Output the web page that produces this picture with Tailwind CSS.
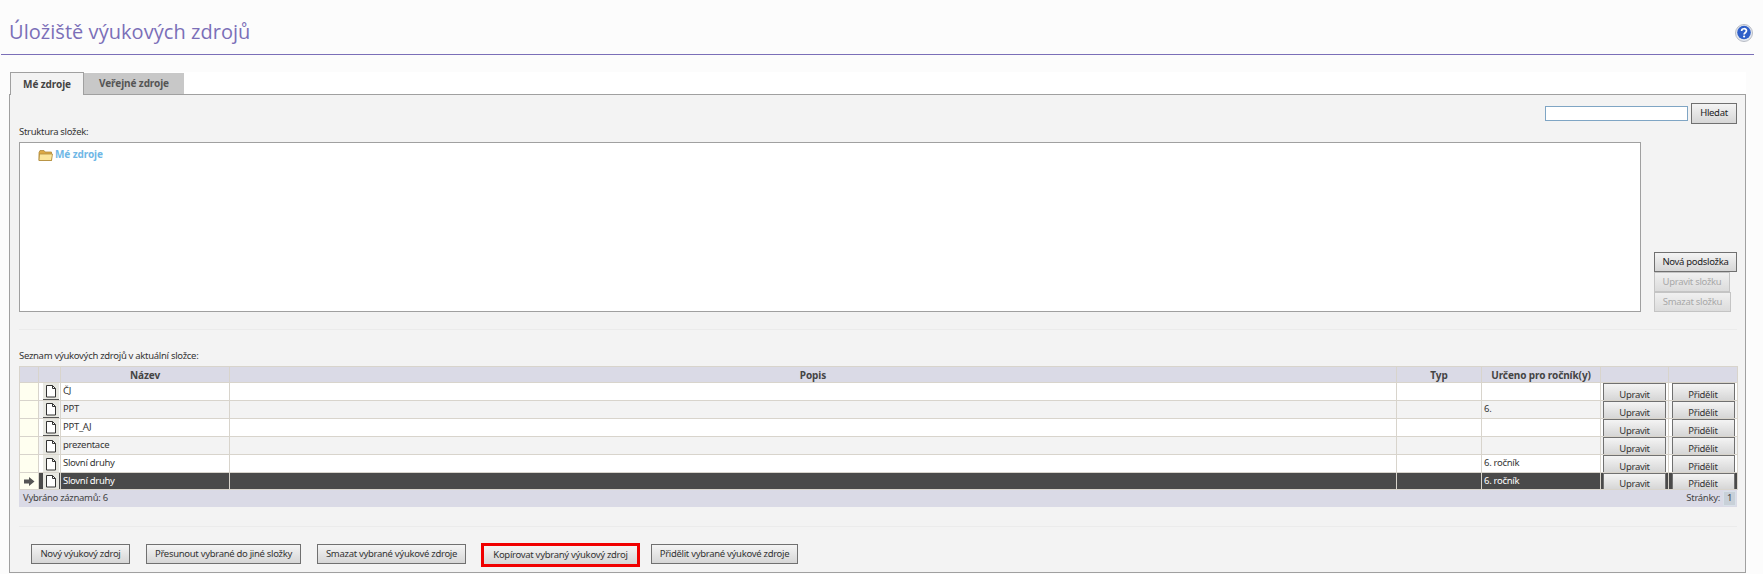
<!DOCTYPE html>
<html lang="cs"><head><meta charset="utf-8"><title>Úložiště výukových zdrojů</title>
<script src="https://cdn.jsdelivr.net/npm/@tailwindcss/browser@4"></script></head>
<body class="m-0 bg-[#fcfcfc] font-['Noto_Sans',sans-serif] text-[9.5px] tracking-[-0.3px] text-[#333] overflow-hidden">
<div class="w-[1763px] h-[574px] flex flex-col">
  <header class="h-[55px] ml-px mr-[9px] border-b border-[#7b6fb8] flex items-start justify-between pl-2 pr-px">
    <h1 class="mt-[19px] text-[20px] tracking-[0.05px] leading-[25px] text-[#7b6fb8] font-normal font-['Open_Sans',sans-serif]">Úložiště výukových zdrojů</h1>
    <svg class="mt-[24px]" width="18" height="18" viewBox="0 0 18 18"><circle cx="9" cy="9" r="8.500" fill="#e4e8f0" stroke="#b8bcc4"/><circle cx="9" cy="8.500" r="6.800" fill="#2f5fc8"/><path d="M6.600 7c0-3 4.900-3 4.900-.2 0 1.900-2.400 1.900-2.400 3.600" fill="none" stroke="#fff" stroke-width="1.700"/><circle cx="9.100" cy="12.500" r="1.100" fill="#fff"/></svg>
  </header>
  <main class="ml-[10px] mr-[17px] mt-[17px] bg-white">
    <nav class="h-[22px] flex items-start font-bold text-[10px] tracking-[-0.1px]">
      <div class="w-[74px] h-[23px] bg-[#f3f3f3] border border-b-0 border-[#a0a0a0] flex items-center justify-center text-[#444] relative z-10">Mé zdroje</div>
      <div class="w-[100px] h-[21px] mt-px bg-[#c8c8c8] flex items-center justify-center text-[#555]">Veřejné zdroje</div>
    </nav>
    <section class="-ml-px h-[479px] border border-[#a0a0a0] bg-[#f3f3f3] pl-[9px] pr-[8px] relative flex flex-col">
      <div class="h-[47px] relative flex items-start justify-between">
        <label class="mt-[30px] leading-[13px] text-[#333]">Struktura složek:</label>
        <div class="mt-2 flex gap-[3px]">
          <input class="w-[143px] h-[15px] mt-[3px] bg-white border border-[#7fa5c4]">
          <button class="w-[46px] h-[21px] border border-[#707070] bg-gradient-to-b from-[#f4f4f4] to-[#d6d6d6] text-[#222]">Hledat</button>
        </div>
      </div>
      <div class="flex h-[170px] justify-between">
        <div class="w-[1622px] h-[170px] bg-white border border-[#a0a0a0] flex items-start pl-[18px] pt-[5px] gap-[2px]">
          <svg width="15" height="13" viewBox="0 0 15 13" class="mt-px"><path d="M1 3.500 2 1.500h4l1 1.500h6.500v8.500H1z" fill="#dca945" stroke="#b08a3a" stroke-width=".8"/><path d="M1 11.500 1.500 5h13l-1 6.500z" fill="#fbe59a" stroke="#b08a3a" stroke-width=".8"/></svg>
          <span class="font-bold text-[10px] tracking-[-0.1px] text-[#6fb7e6] leading-[13px]">Mé zdroje</span>
        </div>
        <div class="w-[83px] flex flex-col justify-end items-start text-[#222]">
          <button class="w-[83px] h-[20px] border border-[#707070] bg-gradient-to-b from-[#f4f4f4] to-[#d6d6d6]">Nová podsložka</button>
          <button class="w-[76px] h-[20px] border border-[#c4c4c4] bg-gradient-to-b from-[#f0f0f0] to-[#dcdcdc] text-[#a8a8a8]">Upravit složku</button>
          <button class="w-[77px] h-[20px] border border-[#c4c4c4] bg-gradient-to-b from-[#f0f0f0] to-[#dcdcdc] text-[#a8a8a8]">Smazat složku</button>
        </div>
      </div>
      <div class="mt-[17px] border-t border-[#ebebeb]"></div>
      <div class="mt-[19px] leading-[14px] h-[17px] text-[#333]">Seznam výukových zdrojů v aktuální složce:</div>
      <table class="table-fixed border-collapse w-[1718px]">
        <colgroup><col class="w-[19px]"><col class="w-[22px]"><col class="w-[169px]"><col class="w-[1167px]"><col class="w-[85px]"><col class="w-[119px]"><col class="w-[68px]"><col class="w-[69px]"></colgroup>
        <thead><tr class="h-[16px] bg-[#dadae6] font-bold text-[10px] leading-[14px] tracking-[-0.1px] text-[#444] text-center">
          <th class="p-0 border border-[#d8d4cc]"></th><th class="p-0 border border-[#d8d4cc]"></th><th class="p-0 border border-[#d8d4cc]">Název</th><th class="p-0 border border-[#d8d4cc]">Popis</th><th class="p-0 border border-[#d8d4cc]">Typ</th><th class="p-0 border border-[#d8d4cc]">Určeno pro ročník(y)</th><th class="p-0 border border-[#d8d4cc]"></th><th class="p-0 border border-[#d8d4cc]"></th>
        </tr></thead>
        <tbody>
          <tr class="h-[18px] bg-white"><td class="border border-[#d8d4cc] bg-[#fffff0]"></td><td class="border border-[#d8d4cc] p-0"><div class="w-[16px] h-[17px] ml-[4px] bg-[#e8e8e2] border-b border-[#555] flex items-center justify-center"><svg width="12" height="14" viewBox="0 0 12 14"><path d="M1.500 1.500h6l3 3v8.500h-9z" fill="#fff" stroke="#333"/><path d="M7.500 1.500v3h3" fill="none" stroke="#333"/></svg></div></td><td class="border border-[#d8d4cc] p-0 px-[2px]">ČJ</td><td class="border border-[#d8d4cc]"></td><td class="border border-[#d8d4cc]"></td><td class="border border-[#d8d4cc] p-0 px-[2px]"></td><td class="border border-[#d8d4cc] p-0 text-center"><button class="block mx-auto w-[63px] h-[17px] pt-[4px] leading-[13px] overflow-hidden border border-[#707070] border-b-0 bg-gradient-to-b from-[#f4f4f4] to-[#d6d6d6] text-[#333]">Upravit</button></td><td class="border border-[#d8d4cc] p-0 text-center"><button class="block mx-auto w-[63px] h-[17px] pt-[4px] leading-[13px] overflow-hidden border border-[#707070] border-b-0 bg-gradient-to-b from-[#f4f4f4] to-[#d6d6d6] text-[#333]">Přidělit</button></td></tr>
          <tr class="h-[18px] bg-[#f3f3f3]"><td class="border border-[#d8d4cc] bg-[#fffff0]"></td><td class="border border-[#d8d4cc] p-0"><div class="w-[16px] h-[17px] ml-[4px] bg-[#e8e8e2] border-b border-[#555] flex items-center justify-center"><svg width="12" height="14" viewBox="0 0 12 14"><path d="M1.500 1.500h6l3 3v8.500h-9z" fill="#fff" stroke="#333"/><path d="M7.500 1.500v3h3" fill="none" stroke="#333"/></svg></div></td><td class="border border-[#d8d4cc] p-0 px-[2px]">PPT</td><td class="border border-[#d8d4cc]"></td><td class="border border-[#d8d4cc]"></td><td class="border border-[#d8d4cc] p-0 px-[2px]">6.</td><td class="border border-[#d8d4cc] p-0 text-center"><button class="block mx-auto w-[63px] h-[17px] pt-[4px] leading-[13px] overflow-hidden border border-[#707070] border-b-0 bg-gradient-to-b from-[#f4f4f4] to-[#d6d6d6] text-[#333]">Upravit</button></td><td class="border border-[#d8d4cc] p-0 text-center"><button class="block mx-auto w-[63px] h-[17px] pt-[4px] leading-[13px] overflow-hidden border border-[#707070] border-b-0 bg-gradient-to-b from-[#f4f4f4] to-[#d6d6d6] text-[#333]">Přidělit</button></td></tr>
          <tr class="h-[18px] bg-white"><td class="border border-[#d8d4cc] bg-[#fffff0]"></td><td class="border border-[#d8d4cc] p-0"><div class="w-[16px] h-[17px] ml-[4px] bg-[#e8e8e2] border-b border-[#555] flex items-center justify-center"><svg width="12" height="14" viewBox="0 0 12 14"><path d="M1.500 1.500h6l3 3v8.500h-9z" fill="#fff" stroke="#333"/><path d="M7.500 1.500v3h3" fill="none" stroke="#333"/></svg></div></td><td class="border border-[#d8d4cc] p-0 px-[2px]">PPT_AJ</td><td class="border border-[#d8d4cc]"></td><td class="border border-[#d8d4cc]"></td><td class="border border-[#d8d4cc] p-0 px-[2px]"></td><td class="border border-[#d8d4cc] p-0 text-center"><button class="block mx-auto w-[63px] h-[17px] pt-[4px] leading-[13px] overflow-hidden border border-[#707070] border-b-0 bg-gradient-to-b from-[#f4f4f4] to-[#d6d6d6] text-[#333]">Upravit</button></td><td class="border border-[#d8d4cc] p-0 text-center"><button class="block mx-auto w-[63px] h-[17px] pt-[4px] leading-[13px] overflow-hidden border border-[#707070] border-b-0 bg-gradient-to-b from-[#f4f4f4] to-[#d6d6d6] text-[#333]">Přidělit</button></td></tr>
          <tr class="h-[18px] bg-[#f3f3f3]"><td class="border border-[#d8d4cc] bg-[#fffff0]"></td><td class="border border-[#d8d4cc] p-0"><div class="w-[16px] h-[17px] ml-[4px] bg-[#e8e8e2] flex items-center justify-center"><svg width="12" height="14" viewBox="0 0 12 14"><path d="M1.500 1.500h6l3 3v8.500h-9z" fill="#fff" stroke="#333"/><path d="M7.500 1.500v3h3" fill="none" stroke="#333"/></svg></div></td><td class="border border-[#d8d4cc] p-0 px-[2px]">prezentace</td><td class="border border-[#d8d4cc]"></td><td class="border border-[#d8d4cc]"></td><td class="border border-[#d8d4cc] p-0 px-[2px]"></td><td class="border border-[#d8d4cc] p-0 text-center"><button class="block mx-auto w-[63px] h-[17px] pt-[4px] leading-[13px] overflow-hidden border border-[#707070] border-b-0 bg-gradient-to-b from-[#f4f4f4] to-[#d6d6d6] text-[#333]">Upravit</button></td><td class="border border-[#d8d4cc] p-0 text-center"><button class="block mx-auto w-[63px] h-[17px] pt-[4px] leading-[13px] overflow-hidden border border-[#707070] border-b-0 bg-gradient-to-b from-[#f4f4f4] to-[#d6d6d6] text-[#333]">Přidělit</button></td></tr>
          <tr class="h-[18px] bg-white"><td class="border border-[#d8d4cc] bg-[#fffff0]"></td><td class="border border-[#d8d4cc] p-0"><div class="w-[16px] h-[17px] ml-[4px] bg-[#e8e8e2] flex items-center justify-center"><svg width="12" height="14" viewBox="0 0 12 14"><path d="M1.500 1.500h6l3 3v8.500h-9z" fill="#fff" stroke="#333"/><path d="M7.500 1.500v3h3" fill="none" stroke="#333"/></svg></div></td><td class="border border-[#d8d4cc] p-0 px-[2px]">Slovní druhy</td><td class="border border-[#d8d4cc]"></td><td class="border border-[#d8d4cc]"></td><td class="border border-[#d8d4cc] p-0 px-[2px]">6. ročník</td><td class="border border-[#d8d4cc] p-0 text-center"><button class="block mx-auto w-[63px] h-[17px] pt-[4px] leading-[13px] overflow-hidden border border-[#707070] border-b-0 bg-gradient-to-b from-[#f4f4f4] to-[#d6d6d6] text-[#333]">Upravit</button></td><td class="border border-[#d8d4cc] p-0 text-center"><button class="block mx-auto w-[63px] h-[17px] pt-[4px] leading-[13px] overflow-hidden border border-[#707070] border-b-0 bg-gradient-to-b from-[#f4f4f4] to-[#d6d6d6] text-[#333]">Přidělit</button></td></tr>
          <tr class="h-[17px] bg-[#4a4a4a] text-white"><td class="border border-[#d8d4cc] bg-[#fffff0] p-0"><svg class="mx-auto" width="11" height="9" viewBox="0 0 11 9"><path d="M0 2.500h5V0l5.500 4.500L5 9V6.500H0z" fill="#555"/></svg></td><td class="border border-[#d8d4cc] p-0"><div class="w-[16px] h-[16px] ml-[4px] bg-[#e8e8e2] flex items-center justify-center"><svg width="12" height="14" viewBox="0 0 12 14"><path d="M1.500 1.500h6l3 3v8.500h-9z" fill="#fff" stroke="#333"/><path d="M7.500 1.500v3h3" fill="none" stroke="#333"/></svg></div></td><td class="border border-[#d8d4cc] p-0 px-[2px]">Slovní druhy</td><td class="border border-[#d8d4cc]"></td><td class="border border-[#d8d4cc]"></td><td class="border border-[#d8d4cc] p-0 px-[2px]">6. ročník</td><td class="border border-[#d8d4cc] p-0 text-center"><button class="block mx-auto w-[63px] h-[16px] pt-[3px] leading-[13px] overflow-hidden border border-[#707070] border-b-0 bg-gradient-to-b from-[#f4f4f4] to-[#d6d6d6] text-[#333]">Upravit</button></td><td class="border border-[#d8d4cc] p-0 text-center"><button class="block mx-auto w-[63px] h-[16px] pt-[3px] leading-[13px] overflow-hidden border border-[#707070] border-b-0 bg-gradient-to-b from-[#f4f4f4] to-[#d6d6d6] text-[#333]">Přidělit</button></td></tr>
        </tbody>
      </table>
      <div class="w-[1718px] h-[17px] bg-[#dadae6] flex items-center justify-between pl-[4px] pr-px text-[#444]">
        <span>Vybráno záznamů: 6</span>
        <span class="flex items-center gap-[3px]">Stránky: <span class="w-[13px] h-[15px] bg-[#c8d0d8] border border-[#d8e0e8] flex items-center justify-center">1</span></span>
      </div>
      <div class="mt-[19px] border-t border-[#ebebeb] w-[1718px]"></div>
      <div class="mt-[16px] flex items-start pl-[12px] text-[#333] whitespace-nowrap">
        <button class="w-[99px] h-[20px] mt-px mr-[16px] border border-[#707070] bg-gradient-to-b from-[#f4f4f4] to-[#d6d6d6]">Nový výukový zdroj</button>
        <button class="w-[155px] h-[20px] mt-px mr-[16px] border border-[#707070] bg-gradient-to-b from-[#f4f4f4] to-[#d6d6d6]">Přesunout vybrané do jiné složky</button>
        <button class="w-[149px] h-[20px] mt-px mr-[15px] border border-[#707070] bg-gradient-to-b from-[#f4f4f4] to-[#d6d6d6]">Smazat vybrané výukové zdroje</button>
        <button class="w-[159px] h-[24px] mr-[11px] border-[3px] border-[#f00000] bg-gradient-to-b from-[#f4f4f4] to-[#d6d6d6]">Kopírovat vybraný výukový zdroj</button>
        <button class="w-[147px] h-[20px] mt-px border border-[#707070] bg-gradient-to-b from-[#f4f4f4] to-[#d6d6d6]">Přidělit vybrané výukové zdroje</button>
      </div>
    </section>
  </main>
</div>
</body></html>
